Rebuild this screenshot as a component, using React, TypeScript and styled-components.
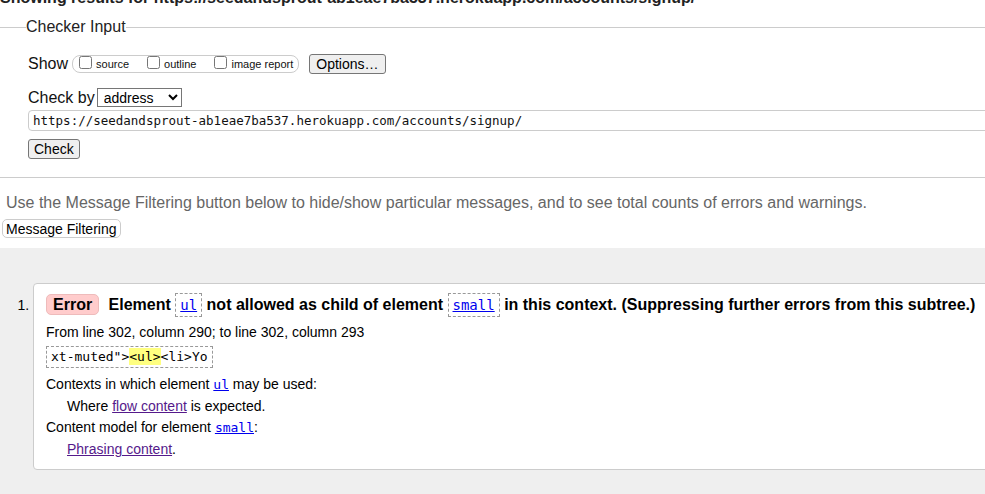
import styled, { createGlobalStyle } from "styled-components";

const GlobalStyle = createGlobalStyle`
  html, body {
    margin: 0;
    padding: 0;
    background: #fff;
    overflow: hidden;
  }
  body {
    font-family: "Liberation Sans", Arial, sans-serif;
    color: #000;
  }
`;

const Page = styled.div`
  display: flex;
  flex-direction: column;
  min-height: 494px;
`;

const ResultsHeading = styled.h2`
  margin: -11px 0 0;
  font-size: 16px;
  line-height: 18px;
  font-weight: 700;
  color: #222;
  white-space: nowrap;
`;

const InputFieldset = styled.fieldset`
  margin: 11px -20px 0 0;
  padding: 0 0 18px 28px;
  border: none;
  border-top: 1px solid #ccc;
  border-bottom: 1px solid #ccc;
  min-width: 0;
`;

const Legend = styled.legend`
  margin-left: -2px;
  padding: 0;
  font-size: 16px;
  line-height: 18px;
  color: #222;
`;

const FormRow = styled.div<{ $gap?: number; $top: number }>`
  display: flex;
  align-items: center;
  gap: ${(p) => p.$gap ?? 2}px;
  margin-top: ${(p) => p.$top}px;
  font-size: 16px;
  color: #111;
`;

const ShowGroup = styled.div`
  display: inline-flex;
  align-items: center;
  height: 16px;
  padding: 0 5px 0 6px;
  margin-left: 4px;
  border: 1px solid #ccc;
  border-radius: 8px;
`;

const ShowOption = styled.label<{ $space?: number }>`
  display: inline-flex;
  align-items: center;
  font-size: 11px;
  margin-right: ${(p) => p.$space ?? 0}px;

  input {
    width: 13px;
    height: 13px;
    margin: 0 4px 0 0;
    position: relative;
    top: -2px;
  }
`;

const NativeButton = styled.button<{ $ml?: number }>`
  font-family: "Liberation Sans", Arial, sans-serif;
  font-size: 14px;
  line-height: 16px;
  height: 20px;
  padding: 0 6px;
  margin-left: ${(p) => p.$ml ?? 0}px;
  color: #000;
  background: #efefef;
  border: 1px solid #767676;
  border-radius: 3px;
`;

const CheckButton = styled(NativeButton)`
  padding: 0 5px;
`;

const FilterButton = styled.button`
  font-family: "Liberation Sans", Arial, sans-serif;
  font-size: 14px;
  line-height: 16px;
  height: 19px;
  padding: 0 3px;
  margin: 7px 0 0 2px;
  align-self: flex-start;
  color: #000;
  background: #fff;
  border: 1px solid #ccc;
  border-radius: 5px;
`;

const Select = styled.select`
  width: 85px;
  height: 19px;
  font-family: "Liberation Sans", Arial, sans-serif;
  font-size: 14px;
  padding: 0 0 0 2px;
  border: 1px solid #767676;
  border-radius: 0;
  background: #fff;
  color: #000;
`;

const UrlInput = styled.input`
  display: block;
  box-sizing: border-box;
  width: calc(100% + 10px);
  height: 21px;
  margin-top: 3px;
  padding: 0 4px;
  font-family: "DejaVu Sans Mono", "Liberation Mono", monospace;
  font-size: 12.5px;
  color: #111;
  border: 1px solid #ccc;
  border-radius: 4px;
`;

const CheckRow = styled.div`
  margin-top: 8px;
`;

const Intro = styled.p`
  margin: 16px 0 0;
  padding-left: 6px;
  font-size: 16px;
  line-height: 18px;
  color: #666;
  white-space: nowrap;
`;

const Results = styled.div`
  flex: 1;
  margin-top: 10px;
  padding-top: 35px;
  background: #efefef;
`;

const MessageList = styled.ol`
  margin: 0 -20px 0 0;
  padding: 0 0 0 33px;
  list-style: decimal;
  font-size: 14px;
`;

const MessageCard = styled.li`
  background: #fff;
  border: 1px solid #ccc;
  border-radius: 4px;
  padding: 9px 12px 8px;
  color: #000;
`;

const MessageTitle = styled.p`
  margin: 0;
  font-size: 16px;
  font-weight: 700;
  line-height: 24px;
  white-space: nowrap;
`;

const ErrorBadge = styled.strong`
  display: inline-block;
  padding: 0 6px;
  margin-right: 5px;
  line-height: 19px;
  background: #fcc;
  border: 1px solid #ebb;
  border-radius: 5px;
`;

const CodeBox = styled.code`
  display: inline-block;
  padding: 0 4px;
  line-height: 22px;
  font-family: "DejaVu Sans Mono", "Liberation Mono", monospace;
  font-size: 14px;
  font-weight: 400;
  border: 1px dashed #999;
  vertical-align: baseline;
`;

const Link = styled.a<{ $visited?: boolean; $mono?: boolean }>`
  color: ${(p) => (p.$visited ? "#551a8b" : "#0000ee")};
  text-decoration: underline;
  font-family: ${(p) =>
    p.$mono
      ? `"DejaVu Sans Mono", "Liberation Mono", monospace`
      : `"Liberation Sans", Arial, sans-serif`};
  font-size: ${(p) => (p.$mono ? "inherit" : "14px")};
`;

const InlineCode = styled.code`
  font-family: "DejaVu Sans Mono", "Liberation Mono", monospace;
  font-size: 13px;
`;

const Location = styled.p`
  margin: 5px 0 0;
  line-height: 20px;
`;

const Extract = styled.div`
  box-sizing: border-box;
  width: fit-content;
  height: 22px;
  margin-top: 4px;
  padding: 0 4px;
  line-height: 20px;
  font-family: "DejaVu Sans Mono", "Liberation Mono", monospace;
  font-size: 13px;
  border: 1px dashed #999;
`;

const Highlight = styled.mark`
  background: #ffff80;
  color: inherit;
  padding: 1px 0;
`;

const Details = styled.dl`
  margin: 6px 0 0;
  line-height: 21.7px;
`;

const Term = styled.dt`
  margin: 0;
`;

const Desc = styled.dd`
  margin: 0 0 0 21px;
`;

export default function App() {
  return (
    <Page>
      <GlobalStyle />
      <ResultsHeading>
        Showing results for https://seedandsprout-ab1eae7ba537.herokuapp.com/accounts/signup/
      </ResultsHeading>

      <InputFieldset>
        <Legend>Checker Input</Legend>
        <FormRow $top={18} $gap={0}>
          <span>Show</span>
          <ShowGroup>
            <ShowOption $space={18}>
              <input type="checkbox" />
              source
            </ShowOption>
            <ShowOption $space={18}>
              <input type="checkbox" />
              outline
            </ShowOption>
            <ShowOption>
              <input type="checkbox" />
              image report
            </ShowOption>
          </ShowGroup>
          <NativeButton $ml={10}>Options…</NativeButton>
        </FormRow>
        <FormRow $top={14}>
          <span>Check by</span>
          <Select defaultValue="address">
            <option value="address">address</option>
            <option value="file">file upload</option>
            <option value="text">text input</option>
          </Select>
        </FormRow>
        <UrlInput
          readOnly
          value="https://seedandsprout-ab1eae7ba537.herokuapp.com/accounts/signup/"
        />
        <CheckRow>
          <CheckButton>Check</CheckButton>
        </CheckRow>
      </InputFieldset>

      <Intro>
        Use the Message Filtering button below to hide/show particular messages, and to see
        total counts of errors and warnings.
      </Intro>
      <FilterButton>Message Filtering</FilterButton>

      <Results>
        <MessageList>
          <MessageCard>
            <MessageTitle>
              <ErrorBadge>Error</ErrorBadge> Element{" "}
              <CodeBox>
                <Link $mono>ul</Link>
              </CodeBox>{" "}
              not allowed as child of element{" "}
              <CodeBox>
                <Link $mono>small</Link>
              </CodeBox>{" "}
              in this context. (Suppressing further errors from this subtree.)
            </MessageTitle>
            <Location>From line 302, column 290; to line 302, column 293</Location>
            <Extract>
              xt-muted"&gt;<Highlight>&lt;ul&gt;</Highlight>&lt;li&gt;Yo
            </Extract>
            <Details>
              <Term>
                Contexts in which element{" "}
                <InlineCode>
                  <Link $mono>ul</Link>
                </InlineCode>{" "}
                may be used:
              </Term>
              <Desc>
                Where <Link $visited>flow content</Link> is expected.
              </Desc>
              <Term>
                Content model for element{" "}
                <InlineCode>
                  <Link $mono>small</Link>
                </InlineCode>
                :
              </Term>
              <Desc>
                <Link $visited>Phrasing content</Link>.
              </Desc>
            </Details>
          </MessageCard>
        </MessageList>
      </Results>
    </Page>
  );
}
